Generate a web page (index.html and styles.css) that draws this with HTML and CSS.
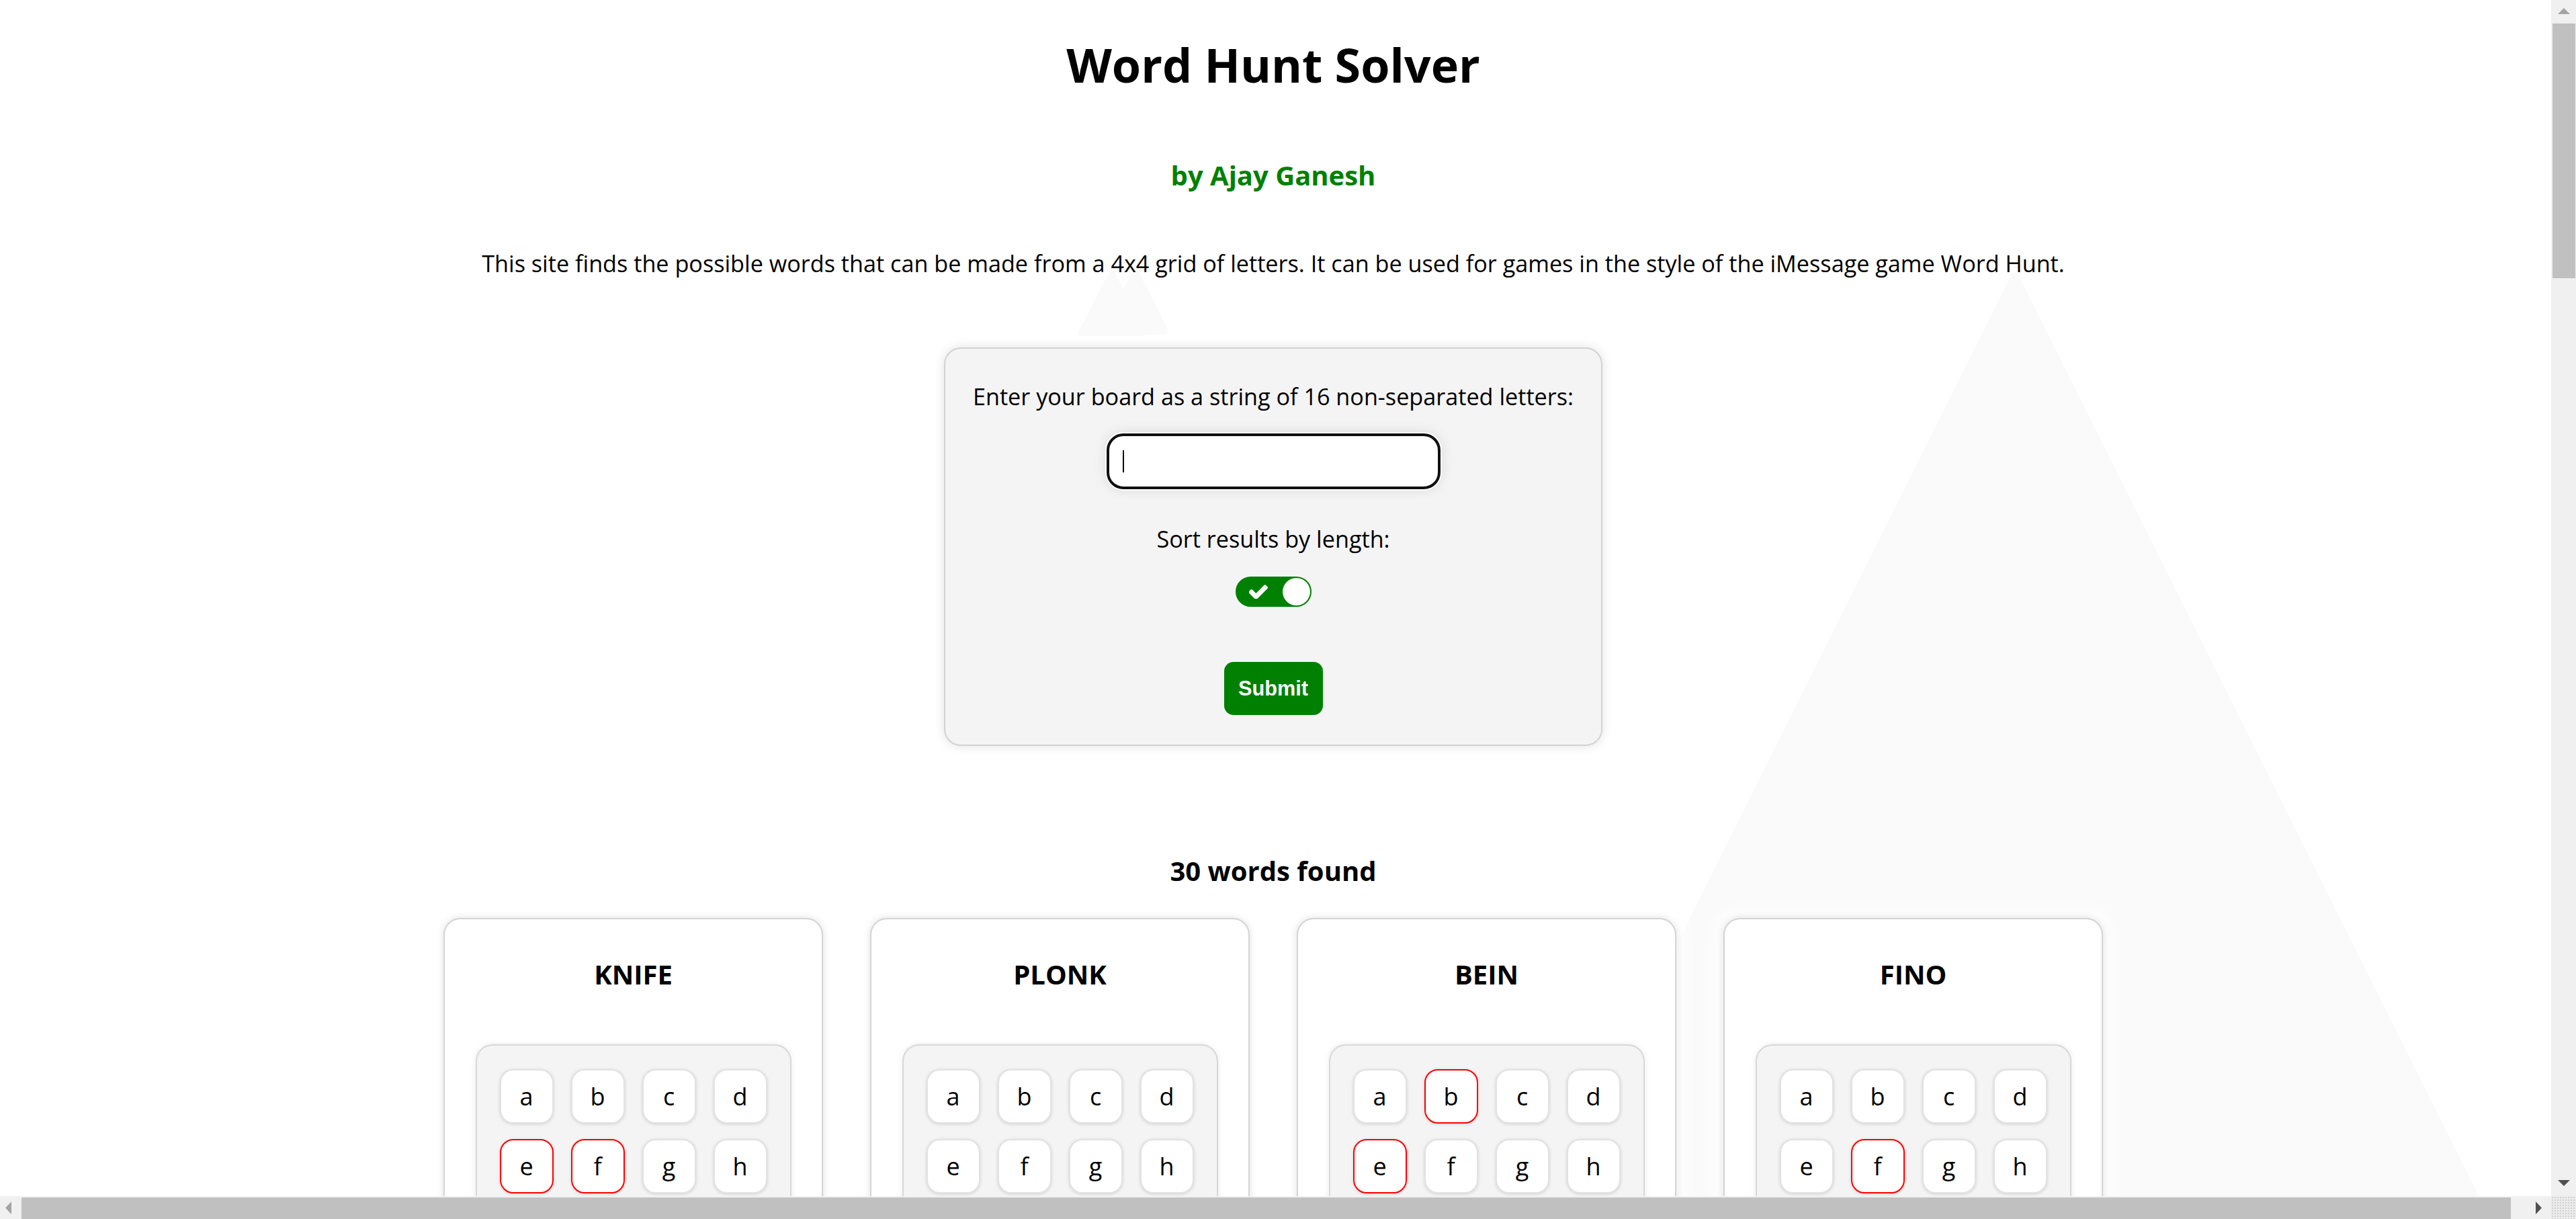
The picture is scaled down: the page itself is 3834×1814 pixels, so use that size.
FILE: index.html
```html
<!DOCTYPE html>
<html lang="en">
<head>
<meta charset="utf-8">
<title>Word Hunt Solver</title>
<link rel="stylesheet" href="styles.css">
</head>
<body>
<svg class="bg-shapes" width="3790" height="2000" viewBox="0 0 3790 2000" aria-hidden="true">
  <polygon class="bg-tri" points="2999,410 2202,2004 3796,2004"/>
  <polygon class="bg-tri small" points="1655,406 1609,496 1701,496"/>
  <polygon class="bg-tri small" points="1690,404 1645,494 1735,494"/>
</svg>
<main class="page">
  <h1 class="title">Word Hunt Solver</h1>
  <h3 class="author">by Ajay Ganesh</h3>
  <p class="intro">This site finds the possible words that can be made from a 4x4 grid of letters. It can be used for games in the style of the iMessage game Word Hunt.</p>

  <form class="form-card" onsubmit="return false;">
    <label class="form-label" for="board">Enter your board as a string of 16 non-separated letters:</label>
    <div class="input-wrap">
      <input class="board-input" id="board" type="text" maxlength="16" autocomplete="off">
      <span class="caret"></span>
    </div>
    <span class="sort-label">Sort results by length:</span>
    <div class="toggle" role="switch" aria-checked="true">
      <svg class="toggle-check" viewBox="149 266 1522 1188" width="28" height="22" aria-hidden="true">
        <path d="M1671 566q0 40-28 68l-724 724-136 136q-28 28-68 28t-68-28l-136-136-362-362q-28-28-28-68t28-68l136-136q28-28 68-28t68 28l294 295 656-657q28-28 68-28t68 28l136 136q28 28 28 68z" fill="#fff"/>
      </svg>
      <span class="toggle-knob"></span>
    </div>
    <button class="submit" type="submit">Submit</button>
  </form>

  <h3 class="results-heading">30 words found</h3>
  <section class="results" id="results"></section>
</main>

<div class="scrollbar-v" aria-hidden="true">
  <span class="sb-btn sb-up">
    <svg width="18" height="9" viewBox="0 0 18 9"><polygon points="0,9 9,0 18,9" fill="#a3a3a3"/></svg>
  </span>
  <span class="sb-thumb-v"></span>
  <span class="sb-btn sb-down">
    <svg width="18" height="9" viewBox="0 0 18 9"><polygon points="0,0 18,0 9,9" fill="#505050"/></svg>
  </span>
</div>
<div class="scrollbar-h" aria-hidden="true">
  <span class="sb-btn-h sb-left">
    <svg width="9" height="19" viewBox="0 0 9 19"><polygon points="9,0 9,19 0,9.5" fill="#a3a3a3"/></svg>
  </span>
  <span class="sb-thumb-h"></span>
  <span class="sb-btn-h sb-right">
    <svg width="9" height="19" viewBox="0 0 9 19"><polygon points="0,0 9,9.5 0,19" fill="#505050"/></svg>
  </span>
</div>
<div class="scrollbar-corner" aria-hidden="true"></div>

<script src="script.js"></script>
</body>
</html>
```

FILE: styles.css
```css
html {
  background: #ffffff;
  scrollbar-width: none;
}

body {
  margin: 0;
  padding: 0 44px 0 0;
  position: relative;
  font-family: "Open Sans", "Noto Sans", sans-serif;
  font-size: 34.2px;
  color: #000;
}

.bg-shapes {
  position: absolute;
  top: 0;
  left: 0;
  z-index: 0;
  pointer-events: none;
}

.bg-tri {
  fill: #fafafa;
  stroke: #fafafa;
  stroke-width: 10;
  stroke-linejoin: round;
}

.bg-tri.small {
  stroke-width: 8;
}

.page {
  position: relative;
  z-index: 1;
  display: flex;
  flex-direction: column;
  align-items: center;
  text-align: center;
}

.title {
  margin: 54px 0 0;
  font-size: 70px;
  line-height: 84px;
  font-weight: 700;
}

.author {
  margin: 99px 0 0;
  font-size: 40px;
  line-height: 48px;
  font-weight: 700;
  color: #008000;
}

.intro {
  margin: 85px 0 0;
  line-height: 44px;
}

.form-card {
  margin: 103px 0 0;
  width: 980px;
  box-sizing: border-box;
  padding: 49px 0 44px;
  background: #f4f4f4;
  border: 2px solid #d2d2d2;
  border-radius: 25px;
  box-shadow: 0 0 16px rgba(0, 0, 0, 0.12);
  display: flex;
  flex-direction: column;
  align-items: center;
}

.form-label {
  display: block;
  line-height: 44px;
}

.input-wrap {
  position: relative;
  margin-top: 33px;
}

.board-input {
  display: block;
  width: 497px;
  height: 83px;
  box-sizing: border-box;
  border: 4.6px solid #101010;
  border-radius: 25px;
  background: #fff;
  box-shadow: 0 0 0 2px #ffffff, 0 0 18px 2px rgba(0, 0, 0, 0.1);
  outline: none;
  padding: 0 22px;
  font: inherit;
  caret-color: transparent;
}

.caret {
  position: absolute;
  left: 24px;
  top: 25px;
  width: 2.5px;
  height: 33px;
  background: #000;
}

.sort-label {
  display: block;
  margin-top: 52px;
  line-height: 44px;
}

.toggle {
  margin-top: 34px;
  width: 113px;
  height: 45px;
  box-sizing: border-box;
  border: 2px solid #008000;
  border-radius: 23px;
  background: #008000;
  display: flex;
  align-items: center;
  justify-content: space-between;
  padding-left: 18px;
}

.toggle-check {
  display: block;
  margin-top: -2px;
}

.toggle-knob {
  width: 41px;
  height: 41px;
  border-radius: 50%;
  background: #fff;
}

.submit {
  margin-top: 82px;
  width: 147px;
  height: 79px;
  padding: 0;
  border: none;
  border-radius: 14px;
  background: #008000;
  color: #fff;
  font-family: "Liberation Sans", Arial, sans-serif;
  font-size: 30.7px;
  font-weight: 700;
}

.results-heading {
  margin: 162px 0 0;
  font-size: 40px;
  line-height: 48px;
  font-weight: 700;
}

.results {
  margin: 46px 0 95px;
  display: grid;
  grid-template-columns: repeat(4, 565px);
  gap: 70px;
}

.word-card {
  box-sizing: border-box;
  padding: 58px 0 103px;
  background: #fff;
  border: 2px solid #d4d4d4;
  border-radius: 25px;
  box-shadow: 0 0 12px rgba(0, 0, 0, 0.12), 0 0 28px 14px rgba(255, 255, 255, 0.85);
  display: flex;
  flex-direction: column;
  align-items: center;
}

.word-title {
  margin: 0;
  font-size: 40px;
  line-height: 48px;
  font-weight: 700;
}

.board {
  margin-top: 80px;
  width: 470px;
  box-sizing: border-box;
  padding: 35px 34px;
  background: #f4f4f4;
  border: 2px solid #d8d8d8;
  border-radius: 25px;
  box-shadow: 0 0 10px rgba(0, 0, 0, 0.08);
  display: grid;
  grid-template-columns: repeat(4, 80px);
  column-gap: 26px;
  row-gap: 23px;
}

.tile {
  height: 81px;
  box-sizing: border-box;
  border: 2px solid #e2e2e2;
  border-radius: 20px;
  background: #fff;
  box-shadow: 0 1px 5px rgba(0, 0, 0, 0.14);
  display: flex;
  align-items: center;
  justify-content: center;
  font-size: 36px;
  line-height: 46px;
}

.tile.used {
  border-color: #ff0000;
}

/* Browser-style scrollbars drawn over the page edges */
.scrollbar-v {
  position: fixed;
  top: 0;
  right: 0;
  width: 37px;
  height: calc(100vh - 34px);
  background: #f0f0f0;
  z-index: 10;
  display: flex;
  flex-direction: column;
}

.sb-btn {
  height: 35px;
  flex: none;
  display: flex;
  justify-content: center;
  padding-left: 1px;
}

.sb-up {
  align-items: flex-start;
  padding-top: 12px;
  box-sizing: border-box;
}

.sb-down {
  margin-top: auto;
  align-items: flex-end;
  padding-bottom: 15px;
  box-sizing: border-box;
}

.sb-btn svg,
.sb-btn-h svg {
  display: block;
}

.sb-thumb-v {
  flex: none;
  height: 379px;
  margin-left: 2px;
  margin-right: 1px;
  background: #c0c0c0;
}

.scrollbar-h {
  position: fixed;
  left: 0;
  bottom: 0;
  width: calc(100vw - 37px);
  height: 34px;
  background: #f0f0f0;
  z-index: 10;
  display: flex;
  align-items: stretch;
}

.sb-btn-h {
  width: 32px;
  flex: none;
  display: flex;
  align-items: center;
  box-sizing: border-box;
}

.sb-left {
  padding-left: 8px;
}

.sb-right {
  margin-left: auto;
  padding-left: 9px;
}

.sb-thumb-h {
  flex: none;
  width: 3705px;
  margin-top: 2px;
  background: #c0c0c0;
}

.scrollbar-corner {
  position: fixed;
  right: 0;
  bottom: 0;
  width: 37px;
  height: 34px;
  z-index: 10;
  background-color: #ececec;
  background-image: radial-gradient(#cfcfcf 0.8px, transparent 1px);
  background-size: 4px 4px;
}
```

FILE: script.js
```js
(function () {
  var board = "abcdefghijklmnop";
  var words = [
    "KNIFE", "PLONK",
    "BEIN", "FINO", "FINK", "GLOP", "JINK", "KNOP", "LONK", "MINK", "MINO", "NIFE", "PLOK", "PONK",
    "ABE", "BAE", "FAB", "FAE", "FIE", "FIN", "INK", "JIN", "KON", "KOP", "LOP", "NIE", "NIM", "NOK", "POL", "FEI"
  ];
  var results = document.getElementById("results");
  words.forEach(function (word) {
    var card = document.createElement("div");
    card.className = "word-card";
    var title = document.createElement("h3");
    title.className = "word-title";
    title.textContent = word;
    card.appendChild(title);
    var grid = document.createElement("div");
    grid.className = "board";
    var lower = word.toLowerCase();
    for (var i = 0; i < board.length; i++) {
      var ch = board.charAt(i);
      var tile = document.createElement("div");
      tile.className = lower.indexOf(ch) !== -1 ? "tile used" : "tile";
      tile.textContent = ch;
      grid.appendChild(tile);
    }
    card.appendChild(grid);
    results.appendChild(card);
  });
})();
```
